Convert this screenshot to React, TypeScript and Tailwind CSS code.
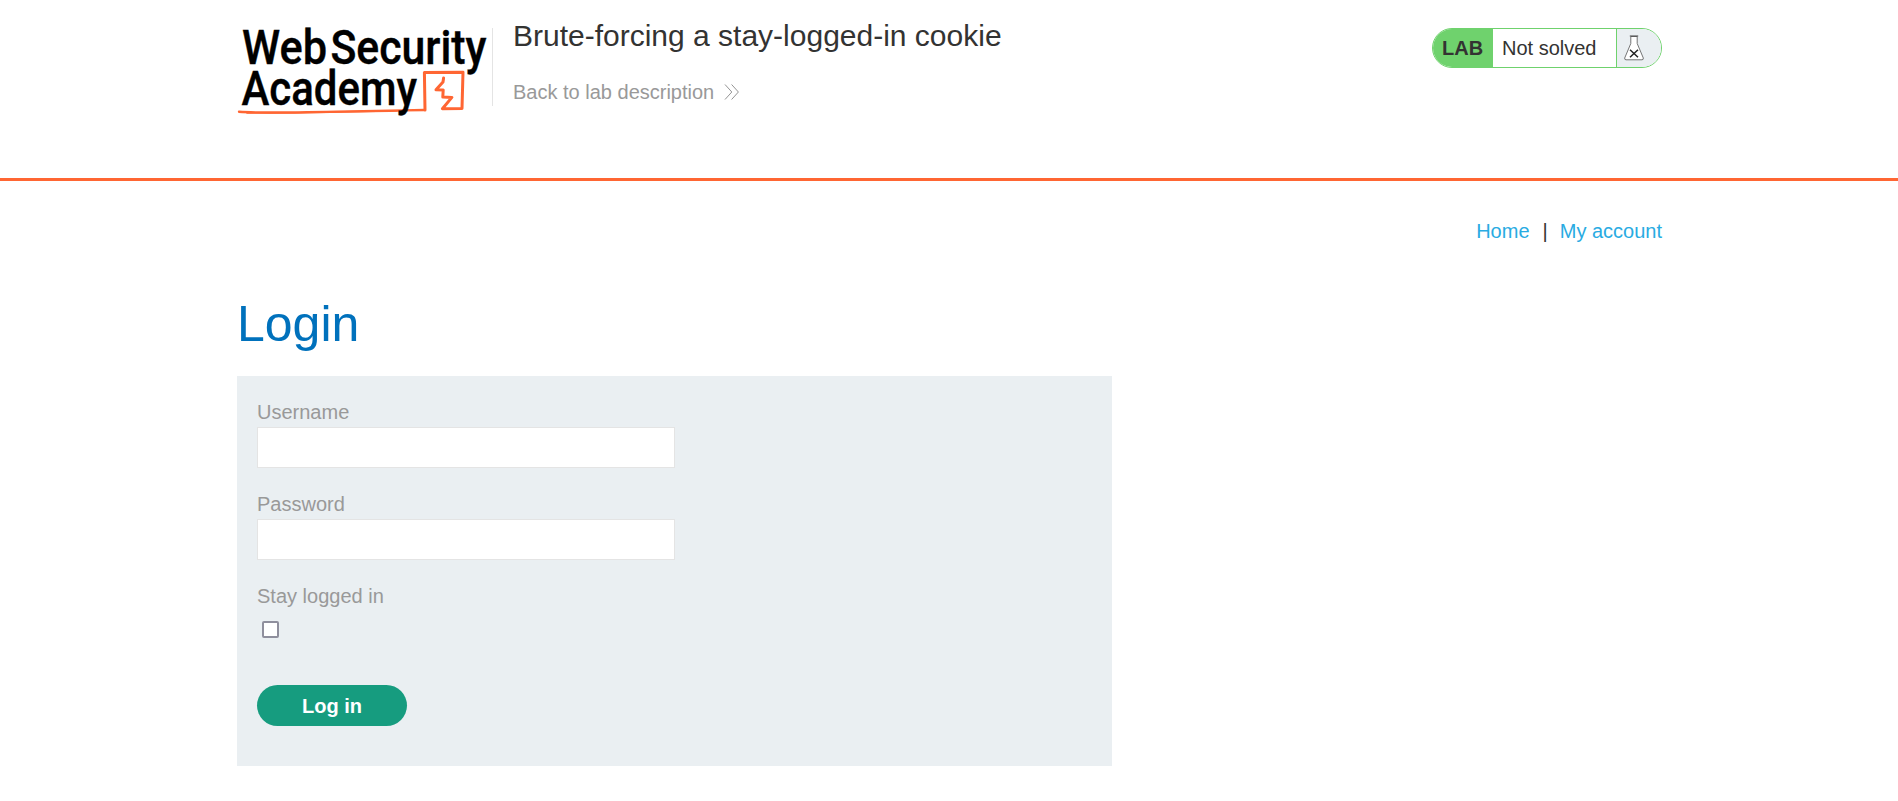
import React from "react";

function AcademyLogo() {
  return (
    <svg className="h-[100px] w-[252px] shrink-0 overflow-visible" viewBox="0 0 252 100" role="img" aria-label="Web Security Academy">
      <g fill="none" stroke="#ff6633" strokeLinejoin="round" strokeLinecap="round">
        <path d="M2 91.8 C20 93.2 60 92.4 100 91.6 S160 90.4 187.5 90" strokeWidth="2.4" />
        <path d="M10 92.8 C50 93.6 100 92 160 90.8" strokeWidth="1.8" />
        <path d="M188 90 L187.4 52.6 L226 52.2 L225 88.4 L205.4 88.8 L214.9 77.4 L205.8 77 L206.2 70 L199 69.8 L206 62 L206.6 58" strokeWidth="3" />
      </g>
      <g fontFamily="Roboto, sans-serif" fontWeight="500" fontSize="48" fill="#000" stroke="#000" strokeWidth="0.4">
        <text x="5" y="43.7" textLength="85" lengthAdjust="spacingAndGlyphs">Web</text>
        <text x="93.5" y="43.7" textLength="156" lengthAdjust="spacingAndGlyphs">Security</text>
        <text x="4.5" y="85" textLength="175.5" lengthAdjust="spacingAndGlyphs">Academy</text>
      </g>
    </svg>
  );
}

function DoubleChevron() {
  return (
    <svg className="h-[18px] w-[16px]" viewBox="0 0 16 18" fill="none" stroke="#888" strokeWidth="0.9">
      <path d="M1 1.5 L7.8 9 L1 16.5 M7.6 1.5 L14.4 9 L7.6 16.5" />
    </svg>
  );
}

function Flask() {
  return (
    <svg className="h-[26px] w-[20px]" viewBox="0 0 20 26">
      <path d="M6.8 1.5 V8.5 L0.7 23 Q0.4 24.8 2 24.8 H18 Q19.6 24.8 19.3 23 L13.2 8.5 V1.5 Z" fill="#fff" stroke="#666" strokeWidth="0.9" />
      <path d="M5.8 1 H14.2" stroke="#444" strokeWidth="1.2" />
      <path d="M6 14.8 L14 22.2 M14 14.8 L6 22.2" stroke="#222" strokeWidth="1.5" />
    </svg>
  );
}

function Field({ label, type }: { label: string; type: string }) {
  return (
    <label className="mb-[24px] block">
      <span className="mb-[3px] block h-6 leading-6">{label}</span>
      <input type={type} className="block h-[41px] w-[418px] border border-[#e4e4e4] bg-white px-2 text-[#333332] outline-none" />
    </label>
  );
}

export default function App() {
  return (
    <div className="min-h-screen bg-white font-['Liberation_Sans',Arial,sans-serif] text-[20px] leading-6 text-[#333332]">
      <header className="h-[181px] border-b-[3px] border-[#ff6633]">
        <div className="ml-[237px] flex w-[1425px] items-start">
          <div className="pt-[20px]">
            <AcademyLogo />
          </div>
          <div className="mt-[28px] ml-[3px] h-[78px] w-px bg-[#e4e4e4]" />
          <div className="ml-[20px] pt-[18px]">
            <h1 className="text-[30px] leading-[36px]">Brute-forcing a stay-logged-in cookie</h1>
            <a href="#" className="mt-[26px] flex items-center gap-[10px] text-[#999]">
              Back to lab description
              <DoubleChevron />
            </a>
          </div>
          <div className="mt-[28px] ml-auto flex h-[40px] w-[230px] overflow-hidden rounded-[20px] border border-[#6fd26d]">
            <div className="flex w-[60px] items-center bg-[#6fd26d] pl-[9px] font-bold">LAB</div>
            <div className="flex flex-1 items-center bg-white pl-[9px]">Not solved</div>
            <div className="flex w-[45px] items-center border-l border-[#6fd26d] bg-[#eaeff2] pl-[7px]">
              <Flask />
            </div>
          </div>
        </div>
      </header>
      <main className="ml-[237px] w-[1425px]">
        <nav className="flex justify-end pt-[38px]">
          <a href="#" className="text-[#29abe2]">Home</a>
          <span className="mr-[12px] ml-[13px]">|</span>
          <a href="#" className="text-[#29abe2]">My account</a>
        </nav>
        <h2 className="mt-[52px] text-[50px] leading-[58px] text-[#0071bc]">Login</h2>
        <form className="mt-[23px] h-[390px] w-[875px] bg-[#eaeff2] px-5 pt-[24px] text-[#999]">
          <Field label="Username" type="text" />
          <Field label="Password" type="password" />
          <label className="block w-fit">
            <span className="block leading-6">Stay logged in</span>
            <input type="checkbox" className="mt-[13px] ml-[5px] block h-[17px] w-[17px] appearance-none rounded-[2px] border-2 border-[#8f8f9d] bg-white" />
          </label>
          <button type="button" className="mt-[47px] h-[41px] w-[150px] rounded-full bg-[#169c7f] font-bold text-white">Log in</button>
        </form>
      </main>
    </div>
  );
}
